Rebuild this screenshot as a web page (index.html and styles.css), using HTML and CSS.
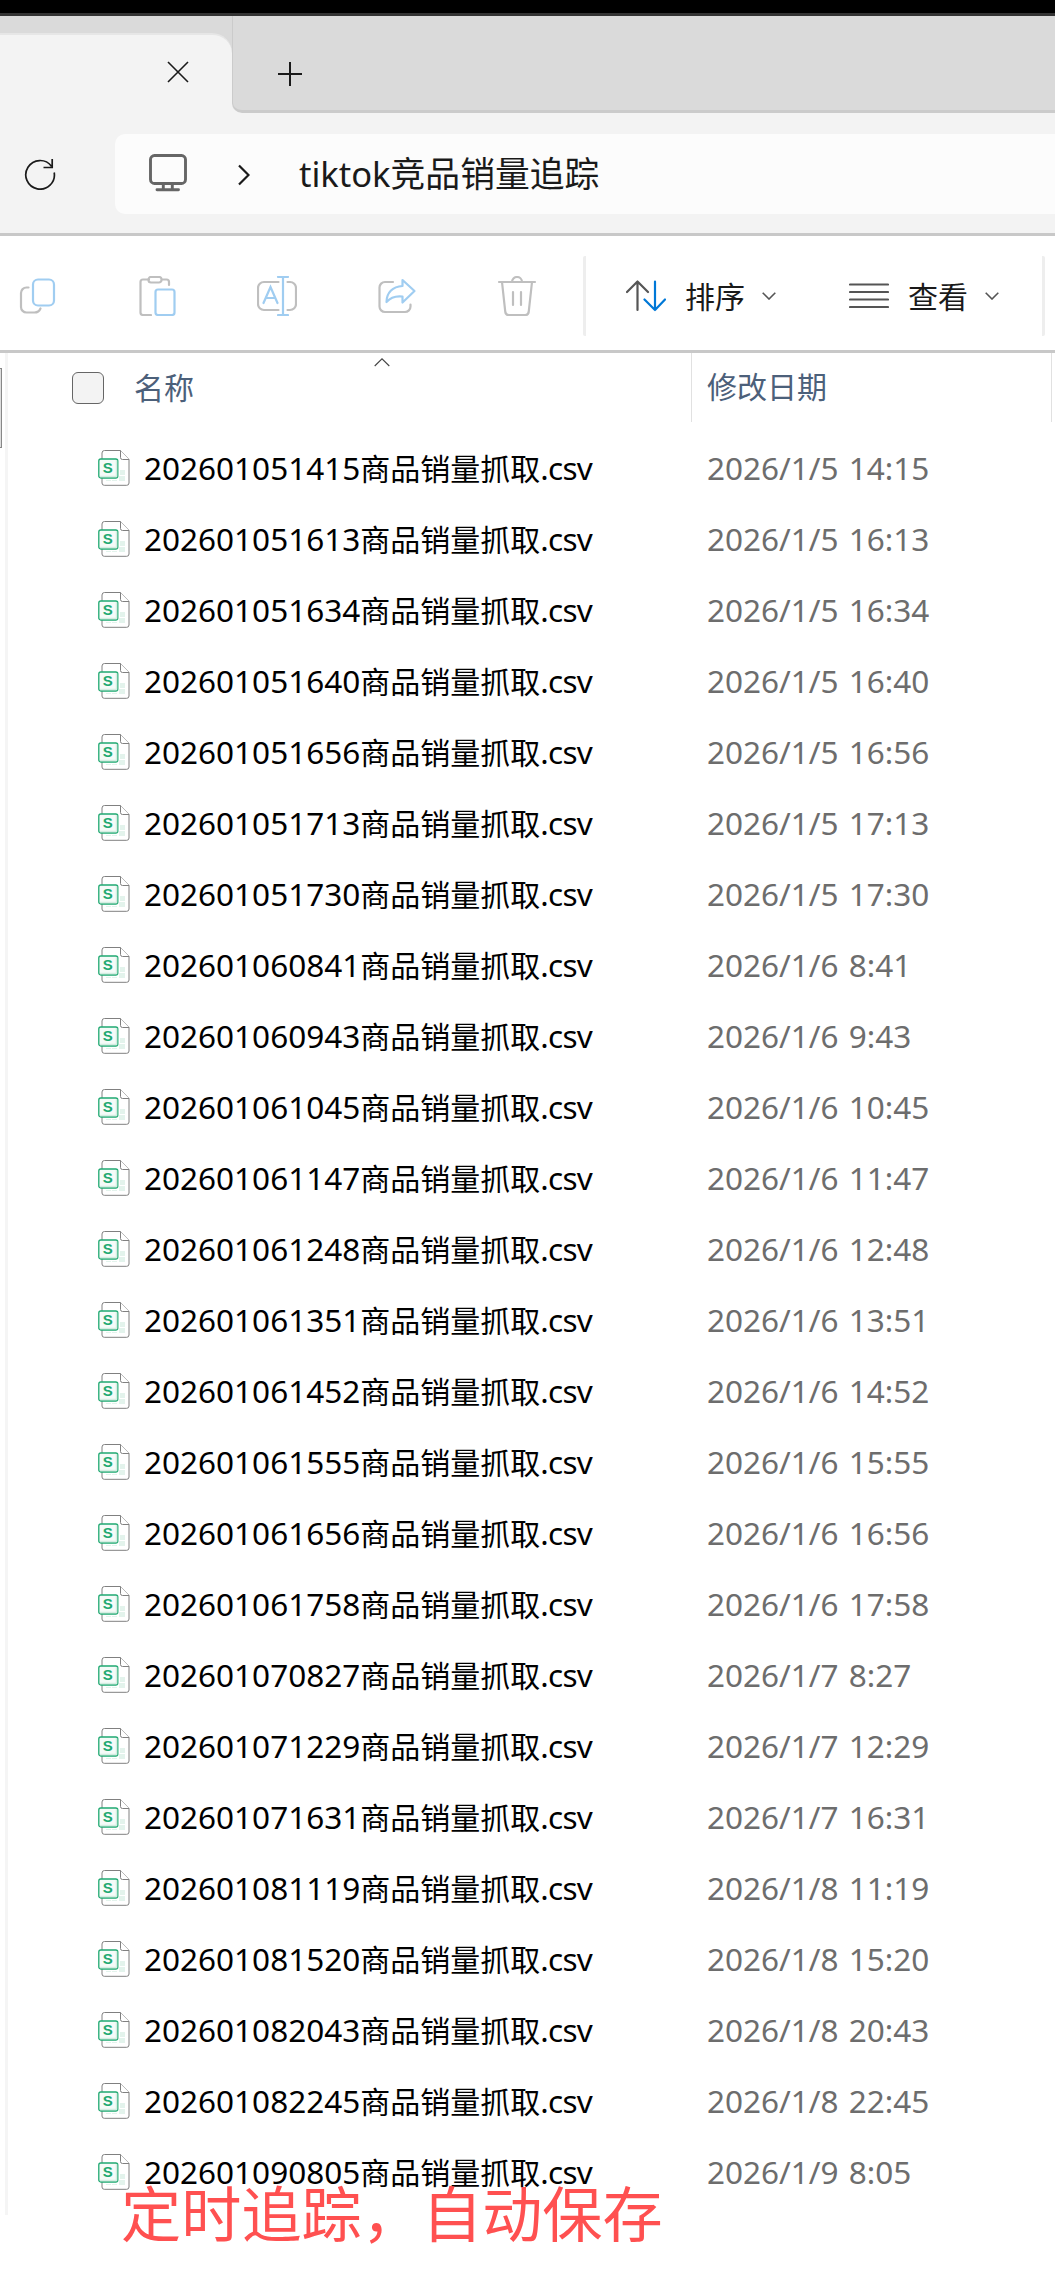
FILE: index.html
```html
<!DOCTYPE html>
<html lang="zh-CN">
<head>
<meta charset="utf-8">
<title>tiktok竞品销量追踪</title>
<link rel="stylesheet" href="styles.css">
</head>
<body>
<svg class="defs" aria-hidden="true">
  <symbol id="csv" viewBox="0 0 32 36">
    <path d="M6.500.5H22.500L31 9.500V33a2.300 2.300 0 0 1-2.300 2.300H6.300A2.300 2.300 0 0 1 4 33V3A2.500 2.500 0 0 1 6.500.5Z" fill="#fff" stroke="#808080"/>
    <path d="M22.500.500V7.500a2 2 0 0 0 2 2H31" fill="#fff" stroke="#808080"/>
    <path d="M22 20h5v5h-5zM21 26h6v5h-6zM8 30h5v1H8zM14 30h5v1h-5z" fill="#e3f3ec"/>
    <rect x=".8" y="9" width="19" height="19" rx="2" fill="#f5fbf8" stroke="#1fa971" stroke-width="1.300"/>
    <path d="M2 26.500h16.500V10" fill="none" stroke="#d5ede2" stroke-width="1.500"/>
    <text x="9.700" y="22.700" text-anchor="middle" class="csv-letter">S</text>
  </symbol>
</svg>
<div class="window">
  <div class="screen-edge"></div>
  <header class="tabs">
    <div class="tab">
      <svg width="22" height="22" viewBox="0 0 22 22" fill="none" stroke="#1a1a1a" stroke-width="1.600"><path d="M1 1 21 21M21 1 1 21"/></svg>
    </div>
    <div class="tab-rest">
      <svg width="24" height="24" viewBox="0 0 24 24" fill="none" stroke="#1a1a1a" stroke-width="2"><path d="M12 0V24M0 12H24"/></svg>
    </div>
  </header>
  <nav class="address">
    <svg class="refresh" width="32" height="32" viewBox="0 0 32 32" fill="none" stroke="#1a1a1a" stroke-width="1.700"><path d="M30.200 14.500A14.300 14.300 0 1 1 27.500 8.200M28.200 1V9.500H19.500"/></svg>
    <div class="field">
      <svg class="monitor" width="38" height="38" viewBox="0 0 38 38" fill="none" stroke="#666" stroke-width="2.900" stroke-linecap="round"><rect x="1.500" y="1.500" width="35" height="28" rx="4"/><path d="M14.300 30v5M23.300 30v5M8 35.700H29.500"/></svg>
      <svg class="crumb" width="12" height="22" viewBox="0 0 12 22" fill="none" stroke="#1a1a1a" stroke-width="2.200"><path d="M1 1.500 10.500 11 1 20.500"/></svg>
      <span class="path">tiktok<span class="path-han">竞品销量追踪</span></span>
    </div>
  </nav>
  <div class="toolbar">
    <div class="tools">
      <svg width="40" height="40" viewBox="0 0 40 40" fill="none" stroke="#bfbfbf" stroke-width="2.200" stroke-linecap="round"><path d="M11.500 11.500H9.500A5.500 5.500 0 0 0 4 17V31A5.500 5.500 0 0 0 9.500 36.500h8c3 0 5-1.500 6-4"/><rect x="16" y="3.500" width="21" height="26" rx="5" stroke="#a0cdf1"/></svg>
      <svg width="40" height="40" viewBox="0 0 40 40" fill="none" stroke="#bfbfbf" stroke-width="2.200" stroke-linecap="round"><path d="M12 3.500H6A2.500 2.500 0 0 0 3.500 6V36.500A2.500 2.500 0 0 0 6 39h8M25.500 3.500h4A2.500 2.500 0 0 1 32 6v3"/><rect x="11.500" y="1" width="13" height="5.500" rx="2.500"/><rect x="18.500" y="13.500" width="19" height="25.500" rx="2.500" stroke="#a0cdf1"/></svg>
      <svg width="40" height="40" viewBox="0 0 40 40" fill="none" stroke="#bfbfbf" stroke-width="2.200" stroke-linecap="round"><path d="M21.500 6H7a6 6 0 0 0-6 6V28a6 6 0 0 0 6 6H21.500M30.500 6H33a6 6 0 0 1 6 6V28a6 6 0 0 1-6 6H30.500"/><path d="M26 1V39M21 1H31M21 39H31M6.500 27 13.500 11 20.500 27M9 22H18" stroke="#a0cdf1"/></svg>
      <svg width="40" height="40" viewBox="0 0 40 40" fill="none" stroke="#bfbfbf" stroke-width="2.200" stroke-linecap="round" stroke-linejoin="round"><path d="M16 6H8a5.500 5.500 0 0 0-5.500 5.500v19A5.500 5.500 0 0 0 8 36H28a5.500 5.500 0 0 0 5.500-5.500V28.500"/><path d="M25.500 4 37.500 15 25.500 26.500V20.500C17.500 19.500 13 22 9.500 26 9.500 17 15.500 10.500 25.500 10Z" stroke="#a0cdf1"/></svg>
      <svg width="40" height="40" viewBox="0 0 40 40" fill="none" stroke="#bfbfbf" stroke-width="2.200" stroke-linecap="round"><path d="M2 6H38M15 6a5 5 0 0 1 10 0M5 6 8.300 36a3.500 3.500 0 0 0 3.400 3H28.300a3.500 3.500 0 0 0 3.400-3L35 6M16 16V29M24 16V29"/></svg>
    </div>
    <div class="menus">
      <div class="menu sort">
        <svg width="40" height="32" viewBox="0 0 40 32" fill="none" stroke="#555" stroke-width="2.200" stroke-linecap="round" stroke-linejoin="round"><path d="M11.500 30V1.500M1 12 11.500 1.500 22 12"/><path d="M29 1.500V30M18.500 19.500 29 30 39 19.500" stroke="#0078d7"/></svg>
        <span>排序</span>
        <svg class="down" width="14" height="8" viewBox="0 0 14 8" fill="none" stroke="#555" stroke-width="1.600"><path d="M.700.700 7 7 13.300.700"/></svg>
      </div>
      <div class="menu">
        <svg width="40" height="28" viewBox="0 0 40 28" fill="none" stroke="#555" stroke-width="2.200" stroke-linecap="round"><path d="M1 2.500H39M1 10H39M1 17.500H39M1 25H39"/></svg>
        <span>查看</span>
        <svg class="down" width="14" height="8" viewBox="0 0 14 8" fill="none" stroke="#555" stroke-width="1.600"><path d="M.700.700 7 7 13.300.700"/></svg>
      </div>
    </div>
  </div>
  <main class="content">
    <aside class="side"><div class="thumb"></div></aside>
    <section class="list">
      <div class="head">
        <div class="col-name"><span class="check"></span><span>名称</span>
          <svg class="asc" width="16" height="9" viewBox="0 0 16 9" fill="none" stroke="#444" stroke-width="1.100"><path d="M.700 8 8 .8 15.300 8"/></svg>
        </div>
        <div class="col-date">修改日期</div>
      </div>
      <div class="rows"></div>
    </section>
  </main>
  <p class="caption">定时追踪，自动保存</p>
</div>
<script src="files.js"></script>
</body>
</html>
```
FILE: files.js
```js
const files = [
  ["202601051415", "2026/1/5 14:15"], ["202601051613", "2026/1/5 16:13"],
  ["202601051634", "2026/1/5 16:34"], ["202601051640", "2026/1/5 16:40"],
  ["202601051656", "2026/1/5 16:56"], ["202601051713", "2026/1/5 17:13"],
  ["202601051730", "2026/1/5 17:30"], ["202601060841", "2026/1/6 8:41"],
  ["202601060943", "2026/1/6 9:43"], ["202601061045", "2026/1/6 10:45"],
  ["202601061147", "2026/1/6 11:47"], ["202601061248", "2026/1/6 12:48"],
  ["202601061351", "2026/1/6 13:51"], ["202601061452", "2026/1/6 14:52"],
  ["202601061555", "2026/1/6 15:55"], ["202601061656", "2026/1/6 16:56"],
  ["202601061758", "2026/1/6 17:58"], ["202601070827", "2026/1/7 8:27"],
  ["202601071229", "2026/1/7 12:29"], ["202601071631", "2026/1/7 16:31"],
  ["202601081119", "2026/1/8 11:19"], ["202601081520", "2026/1/8 15:20"],
  ["202601082043", "2026/1/8 20:43"], ["202601082245", "2026/1/8 22:45"],
  ["202601090805", "2026/1/9 8:05"]
];

document.querySelector(".rows").innerHTML = files.map(([stamp, date]) =>
  `<div class="row"><svg class="file-icon"><use href="#csv"/></svg>` +
  `<span class="file-name">${stamp}<span class="han">商品销量抓取</span><span class="ext">.csv</span></span>` +
  `<span class="file-date">${date}</span></div>`).join("");
```
FILE: styles.css
```css
* { box-sizing: border-box; }
body { margin: 0; background: #fff; color: #1a1a1a; font-family: "Noto Sans", "Noto Sans CJK SC", sans-serif; }
svg { display: block; flex: none; }
.defs { position: absolute; width: 0; height: 0; }
.window { width: 1055px; height: 2275px; overflow: hidden; }
.screen-edge { height: 16px; background: #000; border-bottom: 3px solid #333; }

.tabs { display: flex; height: 97px; padding-top: 17px; background: linear-gradient(#dadada 60px, #f3f3f3 60px); }
.tab { display: flex; justify-content: flex-end; width: 232px; padding: 26px 43px 0 0; background: #f3f3f3; border-top: 2px solid #e6e6e6; border-radius: 0 20px 0 0; }
.tab-rest { flex: 1; margin-top: -17px; padding: 46px 0 0 45px; border-left: 1px solid #cbcbcb; border-bottom: 3px solid #cbcbcb; border-radius: 0 0 0 10px; background: #dadada; }

.address { display: flex; align-items: flex-start; height: 123px; padding: 21px 0 0 24px; background: #f3f3f3; border-bottom: 3px solid #c8c8c8; }
.refresh { margin-top: 24px; }
.field { display: flex; flex: 1; align-items: center; height: 80px; margin-left: 59px; padding-left: 34px; background: #fcfcfc; border-radius: 10px 0 0 10px; }
.monitor { margin-top: -2px; }
.crumb { margin: 2px 0 0 51px; }
.path { margin: -3px 0 0 49px; font-size: 34.500px; line-height: 80px; white-space: nowrap; }
.path-han { font-size: 34.800px; font-family: "Noto Sans CJK SC", sans-serif; }

.toolbar { display: flex; height: 117px; border-bottom: 3px solid #c8c8c8; }
.tools { display: flex; gap: 80px; padding: 40px 0 0 17px; width: 583px; }
.menus { display: flex; width: 462px; height: 80px; margin-top: 20px; padding: 2px 0 0 40px; border-left: 3px solid #eee; border-right: 3px solid #eee; border-radius: 2px; font: 30px/80px "Noto Sans CJK SC", sans-serif; }
.menu { display: flex; align-items: center; height: 76px; }
.menu span { margin: -2px 0 0 19px; }
.down { margin-left: 17px; }
.sort { width: 223px; }

.content { display: flex; height: 1862px; }
.side { width: 8px; padding-top: 15px; border-right: 3px solid #f5f5f5; }
.thumb { width: 2px; height: 80px; background: #ddd; border: solid #888; border-width: 1px 1px 1px 0; }
.list { flex: 1; }
.head { display: flex; height: 69px; color: #4c607a; font: 30px/65px "Noto Sans CJK SC", sans-serif; }
.col-name { display: flex; align-items: center; position: relative; width: 684px; padding: 0 0 2px 64px; border-right: 1px solid #e1e1e1; }
.check { width: 32px; height: 32px; margin: 2px 30px 0 0; border: 1px solid #666; border-radius: 6px; background: #f3f3f3; }
.asc { position: absolute; left: 366px; top: 5px; }
.col-date { width: 360px; padding-left: 15px; border-right: 1px solid #e1e1e1; }
.rows { padding-top: 12px; }
.row { display: grid; grid-template-columns: 46px 563px 1fr; height: 71px; padding-left: 90px; line-height: 67px; white-space: nowrap; }
.file-icon { width: 32px; height: 36px; margin-top: 16px; }
.csv-letter { font: 700 15px "Liberation Sans", sans-serif; fill: #1fa971; }
.file-name, .file-date { font-size: 31.500px; }
.file-name { color: #000; }
.han { font-size: 30px; font-family: "Noto Sans CJK SC", sans-serif; }
.ext { letter-spacing: -.7px; }
.file-date { color: #6d6d6d; word-spacing: 2px; }
.caption { position: relative; width: 560px; margin: -48px 0 0 121px; color: #ff5050; font: 60.200px/88px "Noto Sans CJK SC", sans-serif; white-space: nowrap; }
```
